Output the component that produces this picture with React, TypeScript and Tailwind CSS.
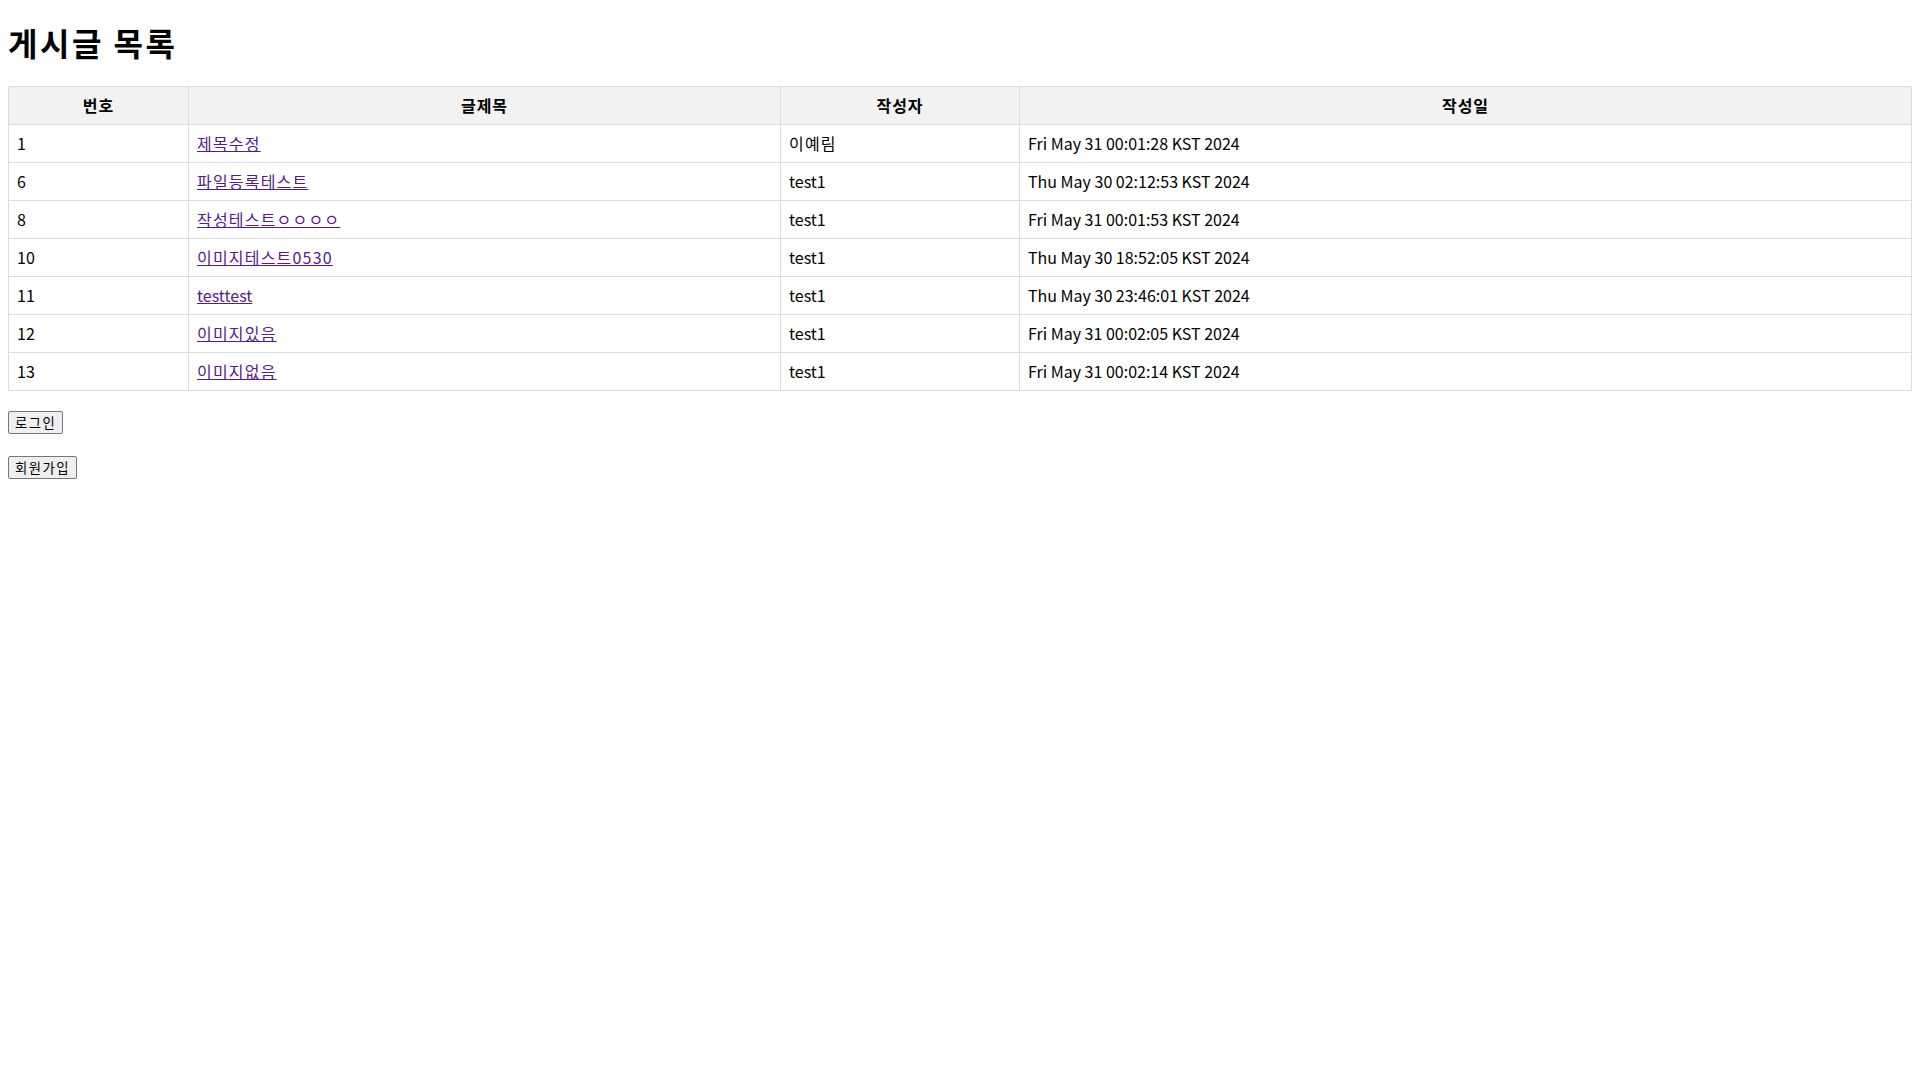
import React from "react";

const rows = [
  { no: "1", title: "제목수정", writer: "이예림", date: "Fri May 31 00:01:28 KST 2024" },
  { no: "6", title: "파일등록테스트", writer: "test1", date: "Thu May 30 02:12:53 KST 2024" },
  { no: "8", title: "작성테스트ㅇㅇㅇㅇ", writer: "test1", date: "Fri May 31 00:01:53 KST 2024" },
  { no: "10", title: "이미지테스트0530", writer: "test1", date: "Thu May 30 18:52:05 KST 2024" },
  { no: "11", title: "testtest", writer: "test1", date: "Thu May 30 23:46:01 KST 2024" },
  { no: "12", title: "이미지있음", writer: "test1", date: "Fri May 31 00:02:05 KST 2024" },
  { no: "13", title: "이미지없음", writer: "test1", date: "Fri May 31 00:02:14 KST 2024" },
];

const isKo = (s: string) => /[\u3131-\uD79D]/.test(s);

export default function App() {
  return (
    <div className="bg-white min-h-screen px-2 pb-2 pt-px text-black font-['Noto_Sans_CJK_KR','Noto_Sans',sans-serif]">
      <h1 className="mt-[20px] mb-[22px] text-[32px] font-bold leading-[43px] tracking-[2.5px]">게시글 목록</h1>
      <table className="w-full border-collapse text-[16px] leading-[21px]">
        <thead>
          <tr className="bg-[#f2f2f2]">
            <th className="w-[180px] border border-[#dddddd] p-2 text-center font-bold tracking-[1px]">번호</th>
            <th className="w-[592px] border border-[#dddddd] p-2 text-center font-bold tracking-[1px]">글제목</th>
            <th className="w-[239px] border border-[#dddddd] p-2 text-center font-bold tracking-[1px]">작성자</th>
            <th className="border border-[#dddddd] p-2 text-center font-bold tracking-[1px]">작성일</th>
          </tr>
        </thead>
        <tbody>
          {rows.map((r) => (
            <tr key={r.no}>
              <td className="border border-[#dddddd] p-2 text-left">{r.no}</td>
              <td className="border border-[#dddddd] p-2 text-left">
                <a href="#" className={isKo(r.title) ? "text-[#551a8b] underline tracking-[1.2px]" : "text-[#551a8b] underline"}>{r.title}</a>
              </td>
              <td className={isKo(r.writer) ? "border border-[#dddddd] p-2 text-left tracking-[1.2px]" : "border border-[#dddddd] p-2 text-left"}>{r.writer}</td>
              <td className="border border-[#dddddd] p-2 text-left">{r.date}</td>
            </tr>
          ))}
        </tbody>
      </table>
      <div className="mt-[20px] flex">
        <button className="h-[23px] rounded-[2px] border border-[#767676] bg-[#efefef] px-[6px] text-[13.33px] leading-[17px] tracking-[1.5px] text-black">로그인</button>
      </div>
      <div className="mt-[22px] flex">
        <button className="h-[23px] rounded-[2px] border border-[#767676] bg-[#efefef] px-[6px] text-[13.33px] leading-[17px] tracking-[1.5px] text-black">회원가입</button>
      </div>
    </div>
  );
}
